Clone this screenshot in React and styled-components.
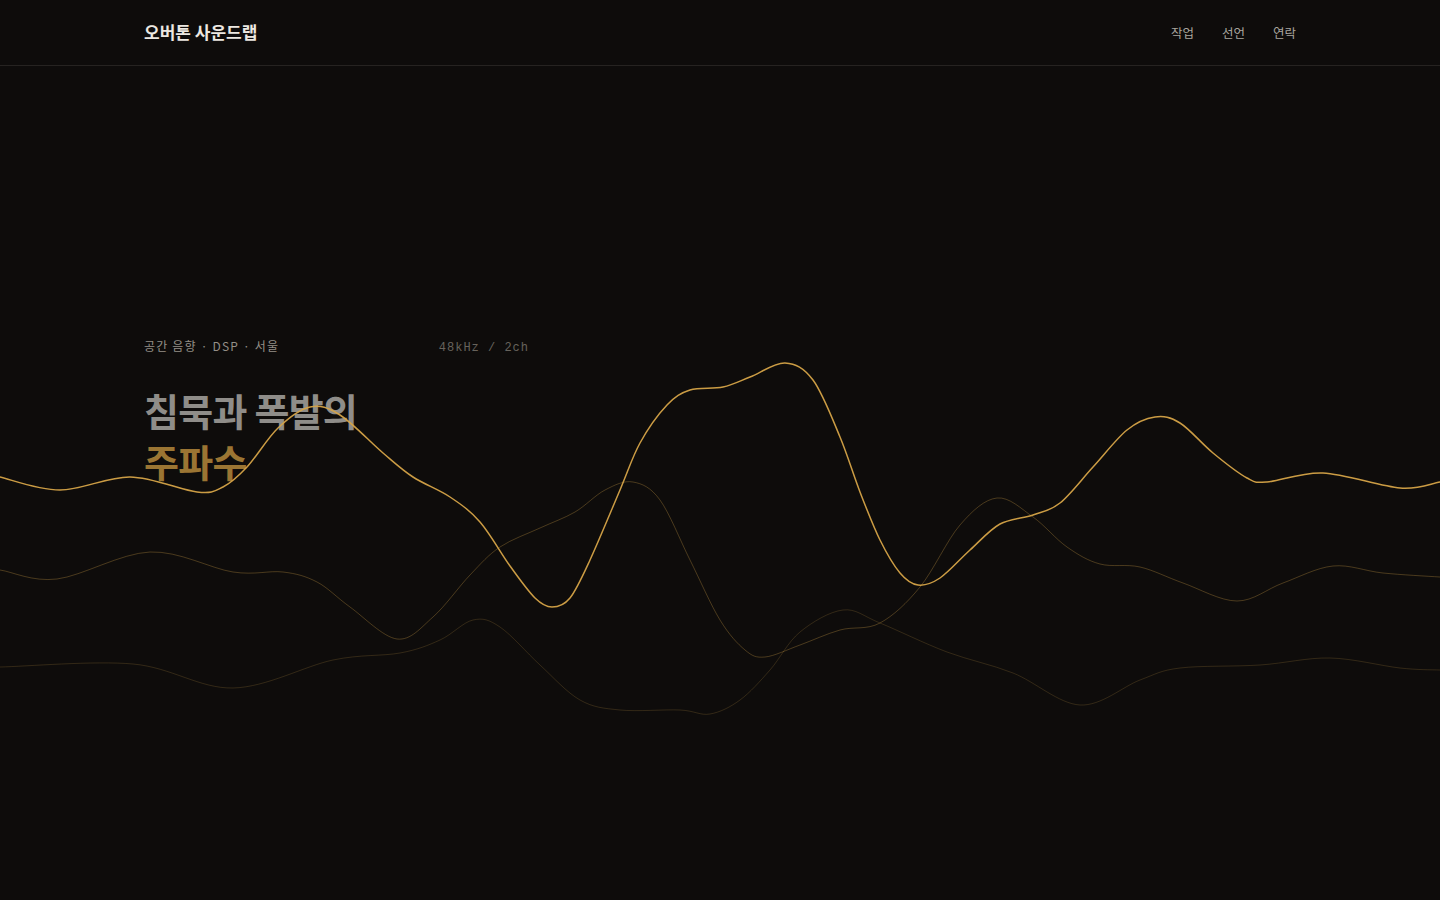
import styled, { createGlobalStyle } from "styled-components";

const GlobalStyle = createGlobalStyle`
    html, body {
        margin: 0;
        padding: 0;
        background: #0e0c0b;
    }
    body {
        font-family: "Noto Sans CJK KR", "Noto Sans", sans-serif;
        color: #e8e4dc;
    }
`;

const waves = [
    {
        stroke: "#d6a448",
        width: 1.5,
        opacity: 0.95,
        points: [
            [-20, 470], [0, 477], [60, 490], [130, 477], [197, 492], [223, 487], [247, 467],
            [278, 428], [310, 407], [340, 415], [383, 453], [413, 477], [450, 497],
            [480, 522], [510, 566], [535, 598], [552, 607], [570, 598], [590, 560],
            [620, 490], [640, 443], [667, 405], [690, 390], [723, 387], [750, 377],
            [785, 363], [813, 380], [840, 437], [860, 492], [880, 540], [900, 573],
            [918, 585], [940, 578], [970, 550], [1000, 524], [1033, 515], [1060, 503],
            [1093, 467], [1127, 430], [1155, 417], [1180, 423], [1213, 453], [1247, 478],
            [1267, 482], [1323, 473], [1400, 488], [1440, 482], [1460, 478],
        ],
    },
    {
        stroke: "#c99a45",
        width: 1,
        opacity: 0.32,
        points: [
            [-20, 568], [0, 570], [57, 579], [150, 552], [233, 572], [283, 572], [317, 582],
            [350, 607], [397, 639], [433, 617], [470, 575], [500, 547], [540, 528],
            [575, 512], [605, 490], [633, 482], [660, 500], [690, 560], [720, 620],
            [745, 650], [765, 657], [800, 645], [840, 630], [880, 623], [920, 587],
            [960, 525], [997, 498], [1033, 517], [1067, 547], [1100, 564], [1140, 567],
            [1183, 583], [1237, 601], [1283, 583], [1333, 566], [1383, 573], [1440, 577],
            [1460, 578],
        ],
    },
    {
        stroke: "#c99a45",
        width: 1,
        opacity: 0.2,
        points: [
            [-20, 667], [0, 667], [133, 664], [233, 688], [333, 660], [400, 653], [440, 640],
            [473, 620], [500, 627], [540, 665], [580, 700], [620, 710], [680, 710],
            [710, 714], [740, 700], [770, 670], [800, 632], [843, 610], [880, 623],
            [947, 652], [1013, 673], [1080, 705], [1140, 680], [1180, 668], [1260, 665],
            [1330, 658], [1400, 668], [1440, 670], [1460, 670],
        ],
    },
];

// catmull-rom -> cubic bezier
const toPath = (pts) => {
    let d = `M${pts[0][0]},${pts[0][1]}`;
    for (let i = 0; i < pts.length - 1; i++) {
        const p0 = pts[i - 1] || pts[i];
        const p1 = pts[i];
        const p2 = pts[i + 1];
        const p3 = pts[i + 2] || p2;
        const c1x = p1[0] + (p2[0] - p0[0]) / 6;
        const c1y = p1[1] + (p2[1] - p0[1]) / 6;
        const c2x = p2[0] - (p3[0] - p1[0]) / 6;
        const c2y = p2[1] - (p3[1] - p1[1]) / 6;
        d += ` C${c1x.toFixed(1)},${c1y.toFixed(1)} ${c2x.toFixed(1)},${c2y.toFixed(1)} ${p2[0]},${p2[1]}`;
    }
    return d;
};

const App = () => {
    return (
        <Page>
            <GlobalStyle />
            <Header>
                <HeaderInner>
                    <Logo>오버톤 사운드랩</Logo>
                    <Nav>
                        <NavLink href="#work">작업</NavLink>
                        <NavLink href="#manifesto">선언</NavLink>
                        <NavLink href="#contact">연락</NavLink>
                    </Nav>
                </HeaderInner>
            </Header>
            <Hero>
                <HeroInner>
                    <MetaRow>
                        <Eyebrow>공간 음향 · DSP · 서울</Eyebrow>
                        <Spec>48kHz / 2ch</Spec>
                    </MetaRow>
                    <Headline>
                        침묵과 폭발의
                        <Accent>주파수</Accent>
                    </Headline>
                </HeroInner>
            </Hero>
            <WaveLayer viewBox="0 0 1440 900" preserveAspectRatio="none" aria-hidden="true">
                {waves.map((w, i) => (
                    <path
                        key={i}
                        d={toPath(w.points)}
                        fill="none"
                        stroke={w.stroke}
                        strokeWidth={w.width}
                        strokeOpacity={w.opacity}
                        strokeLinecap="round"
                    />
                ))}
            </WaveLayer>
        </Page>
    );
};

const Page = styled.div`
    position: relative;
    min-height: 900px;
    background: #0e0c0b;
    overflow: hidden;
`;

const Header = styled.header`
    height: 65px;
    border-bottom: 1px solid #262321;
`;

const HeaderInner = styled.div`
    max-width: 1152px;
    height: 100%;
    margin: 0 auto;
    display: flex;
    align-items: center;
    justify-content: space-between;
`;

const Logo = styled.div`
    font-size: 17px;
    font-weight: 700;
    color: #ece8e1;
    margin-top: -3px;
`;

const Nav = styled.nav`
    display: flex;
    gap: 28px;
`;

const NavLink = styled.a`
    font-size: 12.5px;
    color: #a9a59e;
    text-decoration: none;
`;

const Hero = styled.section`
    padding-top: 271px;
`;

const HeroInner = styled.div`
    max-width: 1152px;
    margin: 0 auto;
`;

const MetaRow = styled.div`
    width: 384px;
    display: flex;
    justify-content: space-between;
    align-items: baseline;
    height: 18px;
`;

const Eyebrow = styled.span`
    font-size: 12px;
    letter-spacing: 0.1em;
    color: #948f87;
`;

const Spec = styled.span`
    font-family: "Liberation Mono", "DejaVu Sans Mono", monospace;
    font-size: 12px;
    letter-spacing: 1px;
    color: #67635c;
    margin-right: -1px;
`;

const Headline = styled.h1`
    margin: 29px 0 0;
    font-size: 38px;
    font-weight: 700;
    line-height: 51px;
    letter-spacing: -0.02em;
    color: #8f8d89;
    display: flex;
    flex-direction: column;
`;

const Accent = styled.span`
    color: #9b7533;
`;

const WaveLayer = styled.svg`
    position: absolute;
    top: 0;
    left: 0;
    width: 100%;
    height: 900px;
    pointer-events: none;
`;

export default App;
